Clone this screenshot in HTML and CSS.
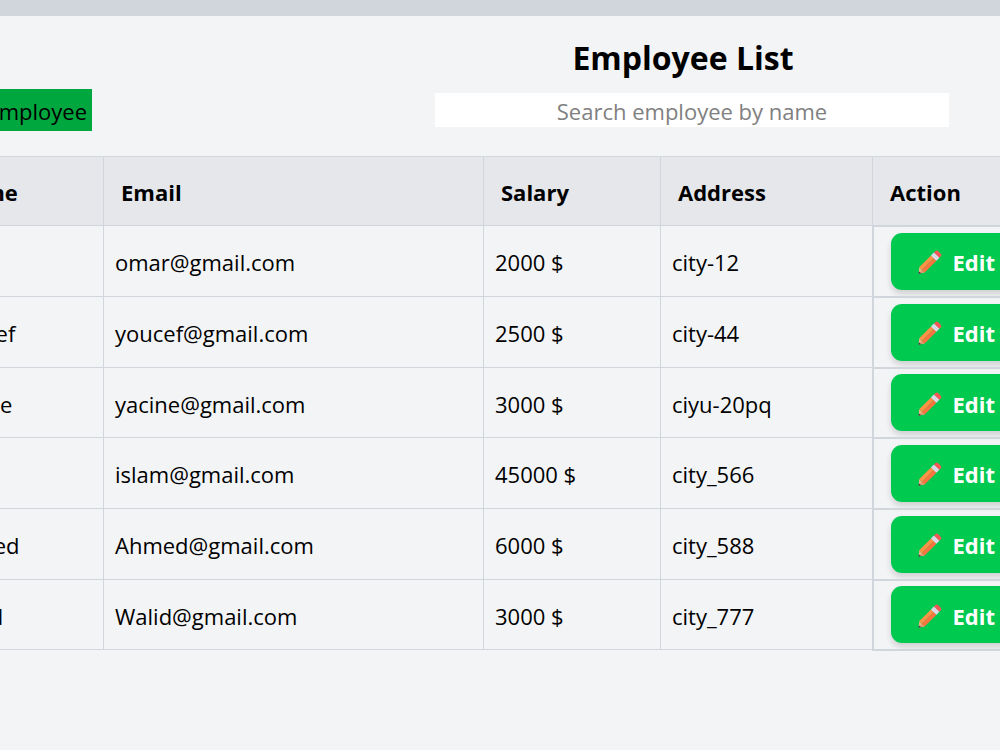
FILE: index.html
```html
<!DOCTYPE html>
<html lang="en">
<head>
  <meta charset="UTF-8" />
  <meta name="viewport" content="width=device-width, initial-scale=1" />
  <title>Employee List</title>
  <link rel="stylesheet" href="styles.css">
</head>
<body>
  <header class="topbar"></header>

  <main class="page">
    <h1 class="title">Employee List</h1>

    <div class="toolbar">
      <button type="button" class="btn-add">Add Employee</button>
      <input type="text" class="search" placeholder="Search employee by name" aria-label="Search employee by name" />
    </div>

    <table class="employees">
      <colgroup>
        <col class="col-name" />
        <col class="col-email" />
        <col class="col-salary" />
        <col class="col-address" />
        <col />
      </colgroup>
      <thead>
        <tr>
          <th>Name</th>
          <th>Email</th>
          <th>Salary</th>
          <th>Address</th>
          <th>Action</th>
        </tr>
      </thead>
      <tbody id="employeeRows"></tbody>
    </table>
  </main>

  <!-- pencil icon used by the edit buttons -->
  <template id="pencil">
    <svg class="pencil" viewBox="0 0 24 24" aria-hidden="true">
      <path fill="#f4b183" d="M1.2 17.2 6.6 22.6 0.8 23.6Z" />
      <path fill="#d99873" d="M3.9 19.9 6.6 22.6 0.8 23.6Z" />
      <path fill="#3c3440" d="M1 21.4 3.2 23.2 0.4 23.7Z" />
      <path fill="#ff9345" d="M1.2 17.2 13 5.4 15.7 8.1 3.9 19.9Z" />
      <path fill="#fb7340" d="M3.9 19.9 15.7 8.1 18.4 10.8 6.6 22.6Z" />
      <path fill="#e3dff0" d="M13 5.4 16 2.4 21.4 7.8 18.4 10.8Z" />
      <path fill="#d0cadf" d="M14.2 4.2 14.8 3.6 20.2 9 19.6 9.6Z" />
      <path fill="#fb5558" d="M16 2.4 17.6 0.9Q18.8 0 20 1L22.9 3.9Q23.9 5 22.8 6.3L21.4 7.8Z" />
    </svg>
  </template>

  <script>
    const employees = [
      { name: 'Ali', email: 'omar@gmail.com', salary: 2000, address: 'city-12' },
      { name: 'Youcef', email: 'youcef@gmail.com', salary: 2500, address: 'city-44' },
      { name: 'Yacine', email: 'yacine@gmail.com', salary: 3000, address: 'ciyu-20pq' },
      { name: 'islam', email: 'islam@gmail.com', salary: 45000, address: 'city_566' },
      { name: 'Ahmed', email: 'Ahmed@gmail.com', salary: 6000, address: 'city_588' },
      { name: 'Walid', email: 'Walid@gmail.com', salary: 3000, address: 'city_777' }
    ];

    const rows = document.getElementById('employeeRows');
    const pencil = document.getElementById('pencil').innerHTML;

    employees.forEach((item) => {
      const row = document.createElement('tr');
      row.innerHTML = `
        <td>${item.name}</td>
        <td>${item.email}</td>
        <td>${item.salary} $</td>
        <td>${item.address}</td>
        <td class="action"><button type="button" class="btn-edit">${pencil}Edit</button></td>
      `;
      rows.appendChild(row);
    });
  </script>
</body>
</html>
```
FILE: styles.css
```css
* {
  box-sizing: border-box;
}
body {
  margin: 0;
  background: #f3f4f6;
  color: #000;
  font-family: "Open Sans", "Noto Sans", sans-serif;
  font-size: 22px;
  line-height: 34px;
  overflow-x: hidden;
}
button, input {
  font: inherit;
  border: 0;
}
.topbar {
  height: 16px;
  background: #d1d5dc;
}
/* wider than the window, the name column runs off to the left */
.page {
  width: calc(100% + 498px);
  margin-left: -66px;
  padding-top: 17px;
}
.title {
  margin: 0;
  font-size: 32px;
  font-weight: 700;
  line-height: 50px;
  text-align: center;
}
.toolbar {
  display: grid;
  grid-template-columns: 158px 514px;
  gap: 343px;
  align-items: center;
  margin: 6px 0 25px;
}
.btn-add {
  justify-self: end;
  padding: 5px 5px 3px;
  background: #00a63e;
  color: #000;
  white-space: nowrap;
}
.search {
  height: 34px;
  padding: 2px 0 0;
  background: #fff;
  text-align: center;
}
.search::placeholder {
  color: #808080;
}
.employees {
  width: 100%;
  table-layout: fixed;
  border-collapse: collapse;
}
.col-name {
  width: 169px;
}
.col-email {
  width: 380px;
}
.col-salary {
  width: 177px;
}
.col-address {
  width: 212px;
}
th, td {
  border: 1px solid #d1d5dc;
  text-align: left;
}
th {
  height: 69px;
  padding: 2px 17px 0;
  background: #e5e7eb;
  font-weight: 700;
}
td {
  height: 71px;
  padding: 2px 11px 0;
}
tbody tr:nth-child(3n) td {
  height: 70px;
}
td.action {
  padding: 0 17px;
  border-width: 2px;
}
.btn-edit {
  display: flex;
  align-items: center;
  gap: 11px;
  height: 57px;
  padding: 2px 27px 0;
  border-radius: 11px;
  background: #00c950;
  box-shadow: 0 4px 6px rgba(0, 0, 0, 0.15);
  color: #fff;
  font-weight: 700;
}
.pencil {
  width: 24px;
  height: 24px;
}
```
